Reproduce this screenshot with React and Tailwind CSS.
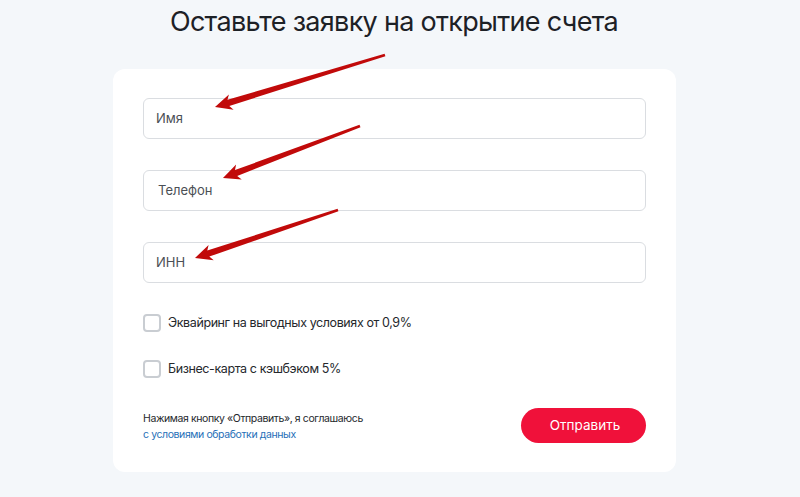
const arrows = [
  { from: [385, 55], to: [215, 107] },
  { from: [360, 126], to: [223, 178] },
  { from: [338, 210], to: [195, 258] },
];

function arrowPoints({ from, to }) {
  const dx = to[0] - from[0];
  const dy = to[1] - from[1];
  const len = Math.hypot(dx, dy);
  const ux = dx / len;
  const uy = dy / len;
  const nx = -uy;
  const ny = ux;
  const at = (d, w) => [to[0] - ux * d + nx * w, to[1] - uy * d + ny * w];
  const pts = [
    at(len, 1.3),
    at(14, 3.2),
    at(17, 8),
    at(0, 0),
    at(17, -8),
    at(14, -3.2),
    at(len, -1.3),
  ];
  return pts.map((p) => p.map((v) => v.toFixed(1)).join(",")).join(" ");
}

function Field({ label, pad = "pl-3" }) {
  return (
    <div
      className={`flex h-[41px] items-center rounded-md border border-[#dadde1] bg-white ${pad} text-[13px] text-[#4b4f55]`}
    >
      {label}
    </div>
  );
}

function Check({ label }) {
  return (
    <label className="flex h-[18px] items-center gap-[7px] text-[12.5px] tracking-[-0.4px] text-[#25282c]">
      <span className="h-[18px] w-[18px] rounded-[4px] border-2 border-[#c9cdd2] bg-white" />
      {label}
    </label>
  );
}

export default function App() {
  return (
    <div
      className="relative h-[497px] w-[800px] overflow-hidden bg-[#f4f7fa]"
      style={{ fontFamily: "Inter, 'Noto Sans', sans-serif" }}
    >
      <h1 className="pr-[12px] pt-[4px] text-center text-[27px] leading-[36px] tracking-[-0.7px] text-[#1d2126]">
        Оставьте заявку на открытие счета
      </h1>

      <div className="mt-[29px] flex justify-center pr-[11px]">
        <div className="w-[563px] rounded-xl bg-white px-[30px] pb-[27px] pt-[29px]">
          <div className="flex flex-col gap-[31px]">
            <Field label="Имя" />
            <Field label="Телефон" pad="pl-[14px]" />
            <Field label="ИНН" />
          </div>

          <div className="mt-[31px] flex flex-col gap-[28px]">
            <Check label="Эквайринг на выгодных условиях от 0,9%" />
            <Check label="Бизнес-карта с кэшбэком 5%" />
          </div>

          <div className="mt-[30px] flex items-center justify-between">
            <div className="text-[10.5px] leading-[16px] tracking-[-0.4px] text-[#25282c]">
              <p>Нажимая кнопку «Отправить», я соглашаюсь</p>
              <p className="text-[#1f6fb8]">с условиями обработки данных</p>
            </div>
            <button className="mb-[2px] h-[35px] w-[125px] rounded-full bg-[#f0113a] pl-[3px] text-[13.5px] text-white">
              Отправить
            </button>
          </div>
        </div>
      </div>

      <svg
        className="pointer-events-none absolute left-0 top-0"
        width="800"
        height="497"
        viewBox="0 0 800 497"
      >
        {arrows.map((a, i) => (
          <polygon key={i} points={arrowPoints(a)} fill="#c10a0a" />
        ))}
      </svg>
    </div>
  );
}
